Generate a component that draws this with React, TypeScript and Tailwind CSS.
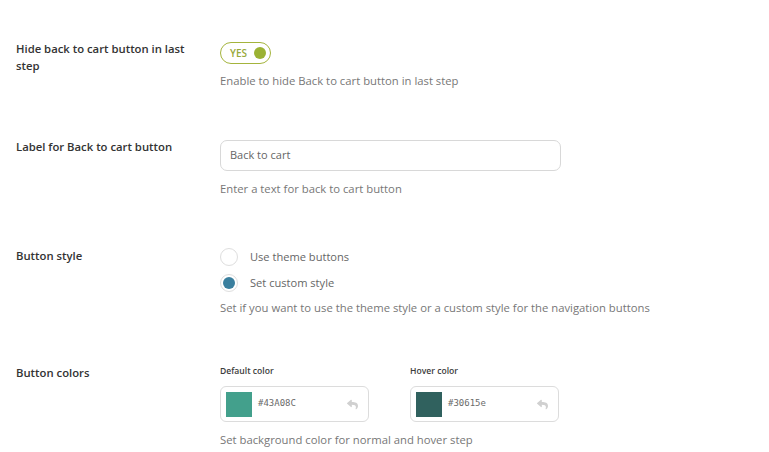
import React from 'react';
import { FaReply } from 'react-icons/fa';

const font = { fontFamily: '"Open Sans", "Noto Sans", sans-serif' };

const ColorField = ({ label, value, swatch }: { label: string; value: string; swatch: string }) => (
  <div className="w-[149px]">
    <div className="text-[8.6px] font-semibold text-[#3c3c3c] leading-[14px] mb-[8px]">{label}</div>
    <div className="h-[36px] rounded-[6px] border border-[#dcdcdc] flex items-center pl-[5px] pr-[10px]">
      <div className={`w-[26px] h-[25px] ${swatch}`}></div>
      <span className="ml-[6px] text-[9px] text-[#6a6a6a] font-['DejaVu_Sans_Mono',monospace]">{value}</span>
      <FaReply className="ml-auto text-[#d0d0d0] w-[11px] h-[11px]" />
    </div>
  </div>
);

const App = () => {
  return (
    <div className="bg-white w-[769px] h-[452px] overflow-hidden pl-[16px] pt-[40px]" style={font}>
      <div className="flex flex-col">
        {/* Hide back to cart */}
        <div className="flex">
          <div className="w-[204px] pr-[22px] text-[11.3px] font-semibold text-[#333] leading-[17px]">
            Hide back to cart button in last step
          </div>
          <div className="pt-[2px]">
            <div className="w-[51px] h-[22px] rounded-full border-[1.5px] border-[#a4b43c] flex items-center pl-[9px] pr-[4px]">
              <span className="text-[10px] font-semibold text-[#98a93a] leading-none">YES</span>
              <span className="ml-auto w-[12px] h-[12px] rounded-full bg-[#9bb233]"></span>
            </div>
            <div className="mt-[9px] text-[11.3px] text-[#777] leading-[16px]">Enable to hide Back to cart button in last step</div>
          </div>
        </div>

        {/* Label for back to cart */}
        <div className="flex mt-[49px]">
          <div className="w-[204px] text-[11.3px] font-semibold text-[#333] leading-[17px]">
            Label for Back to cart button
          </div>
          <div className="pt-[2px]">
            <div className="w-[341px] h-[31px] rounded-[7px] border border-[#d8d8d8] flex items-center px-[9px] text-[11px] text-[#666]">
              Back to cart
            </div>
            <div className="mt-[10px] text-[11.3px] text-[#777] leading-[16px]">Enter a text for back to cart button</div>
          </div>
        </div>

        {/* Button style */}
        <div className="flex mt-[50px]">
          <div className="w-[204px] text-[11.3px] font-semibold text-[#333] leading-[17px]">
            Button style
          </div>
          <div className="pt-[1px]">
            <div className="flex items-center gap-[12px] h-[18px]">
              <span className="w-[18px] h-[18px] rounded-full border border-[#dedede]"></span>
              <span className="text-[11.1px] text-[#666]">Use theme buttons</span>
            </div>
            <div className="flex items-center gap-[12px] h-[18px] mt-[8px]">
              <span className="w-[18px] h-[18px] rounded-full border border-[#dedede] flex items-center justify-center">
                <span className="w-[12px] h-[12px] rounded-full bg-[#3a7f9e]"></span>
              </span>
              <span className="text-[11.1px] text-[#666]">Set custom style</span>
            </div>
            <div className="mt-[8px] text-[11.3px] text-[#777] leading-[16px]">
              Set if you want to use the theme style or a custom style for the navigation buttons
            </div>
          </div>
        </div>

        {/* Button colors */}
        <div className="flex mt-[48px]">
          <div className="w-[204px] text-[11.3px] font-semibold text-[#333] leading-[17px]">
            Button colors
          </div>
          <div>
            <div className="flex gap-[41px]">
              <ColorField label="Default color" value="#43A08C" swatch="bg-[#43a08c]" />
              <ColorField label="Hover color" value="#30615e" swatch="bg-[#30615e]" />
            </div>
            <div className="mt-[10px] text-[11.3px] text-[#777] leading-[16px]">Set background color for normal and hover step</div>
          </div>
        </div>
      </div>
    </div>
  );
};

export default App;
